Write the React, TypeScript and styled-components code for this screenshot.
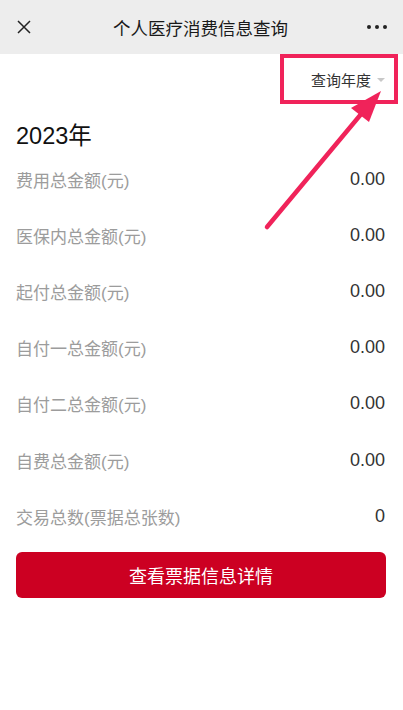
import React from 'react';
import styled, { createGlobalStyle } from 'styled-components';

const GlobalStyle = createGlobalStyle`
  body {
    margin: 0;
    background: #ffffff;
    font-family: "Liberation Sans", Roboto, "Noto Sans CJK SC", sans-serif;
  }
`;

const Page = styled.div`
  position: relative;
  width: 403px;
  height: 710px;
  background: #ffffff;
  overflow: hidden;
`;

const NavBar = styled.div`
  height: 54px;
  background: #ededed;
  display: flex;
  align-items: center;
  justify-content: space-between;
  padding: 0 12px 0 10px;
  box-sizing: border-box;
`;

const NavIcon = styled.div`
  width: 28px;
  height: 28px;
  display: flex;
  align-items: center;
  justify-content: center;
`;

const Title = styled.div`
  font-size: 17.5px;
  color: #191919;
  font-family: "Noto Sans CJK SC", sans-serif;
`;

const Filter = styled.div`
  display: flex;
  justify-content: flex-end;
  align-items: center;
  height: 50px;
  padding-right: 18px;
  font-size: 15px;
  color: #333;
  font-family: "Noto Sans CJK SC", sans-serif;
  gap: 6px;
`;

const Caret = styled.span`
  width: 0;
  height: 0;
  border-left: 4px solid transparent;
  border-right: 4px solid transparent;
  border-top: 4px solid #c8c8c8;
  margin-top: 2px;
`;

const Content = styled.div`
  padding: 0 16px;
`;

const Year = styled.div`
  font-size: 23.5px;
  color: #111;
  font-family: "Liberation Sans", "Noto Sans CJK SC", sans-serif;
  height: 30px;
  line-height: 30px;
  margin-top: 17px;
`;

const Row = styled.div`
  display: flex;
  justify-content: space-between;
  align-items: center;
  height: 56.2px;
  padding-right: 2px;
`;

const Label = styled.span`
  font-size: 17px;
  color: #9c9c9c;
  font-family: "Liberation Sans", "Noto Sans CJK SC", sans-serif;
`;

const Value = styled.span`
  font-size: 18px;
  color: #333;
  font-family: "Liberation Sans", sans-serif;
`;

const Button = styled.button`
  display: block;
  width: 370px;
  height: 46px;
  margin-top: 8px;
  border: none;
  border-radius: 6px;
  background: #cc0022;
  color: #fff;
  font-size: 18px;
  font-family: "Noto Sans CJK SC", sans-serif;
`;

const Annotation = styled.svg`
  position: absolute;
  left: 0;
  top: 0;
  pointer-events: none;
`;

const rows: [string, string][] = [
  ['费用总金额(元)', '0.00'],
  ['医保内总金额(元)', '0.00'],
  ['起付总金额(元)', '0.00'],
  ['自付一总金额(元)', '0.00'],
  ['自付二总金额(元)', '0.00'],
  ['自费总金额(元)', '0.00'],
  ['交易总数(票据总张数)', '0'],
];

const App = () => {
  return (
    <Page>
      <GlobalStyle />
      <NavBar>
        <NavIcon>
          <svg width="16" height="16" viewBox="0 0 16 16">
            <path d="M2 2 L14 14 M14 2 L2 14" stroke="#222" strokeWidth="1.5" />
          </svg>
        </NavIcon>
        <Title>个人医疗消费信息查询</Title>
        <NavIcon>
          <svg width="22" height="6" viewBox="0 0 22 6">
            <circle cx="3" cy="3" r="2" fill="#222" />
            <circle cx="11" cy="3" r="2" fill="#222" />
            <circle cx="19" cy="3" r="2" fill="#222" />
          </svg>
        </NavIcon>
      </NavBar>
      <Filter>
        查询年度
        <Caret />
      </Filter>
      <Content>
        <Year>2023年</Year>
        {rows.map(([label, value]) => (
          <Row key={label}>
            <Label>{label}</Label>
            <Value>{value}</Value>
          </Row>
        ))}
        <Button>查看票据信息详情</Button>
      </Content>
      <Annotation width="403" height="710">
        <rect x="282" y="56" width="114" height="46" fill="none" stroke="#f0235a" strokeWidth="4" />
        <line x1="267" y1="227" x2="362" y2="113" stroke="#f0235a" strokeWidth="4.5" strokeLinecap="round" />
        <polygon points="381,91 351,108 369,122" fill="#f0235a" />
      </Annotation>
    </Page>
  );
};

export default App;
